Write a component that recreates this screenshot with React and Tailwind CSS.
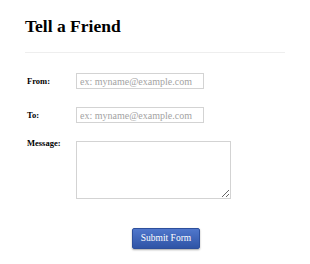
import React from "react";

export default function App() {
  const inputCls =
    "w-[128px] h-[16px] border border-[#d3d3d3] px-[3px] [font-family:'Liberation_Serif',serif] text-[10px] placeholder:text-[#a3a3a3] outline-none";
  return (
    <div className="w-[310px] h-[264px] bg-white px-[25px] [font-family:'Liberation_Serif',serif] text-black overflow-hidden">
      <h1 className="pt-[15px] text-[17.5px] leading-[22px] font-bold">Tell a Friend</h1>
      <div className="mt-[15px] h-px bg-[#eeeeee]" />
      <div className="mt-[20px] flex items-start">
        <label className="w-[51px] pl-[2px] mt-[2.5px] text-[8.5px] leading-[10px] font-bold">From:</label>
        <input type="text" placeholder="ex: myname@example.com" className={inputCls} />
      </div>
      <div className="mt-[18px] flex items-start">
        <label className="w-[51px] pl-[2px] mt-[2.5px] text-[8.5px] leading-[10px] font-bold">To:</label>
        <input type="text" placeholder="ex: myname@example.com" className={inputCls} />
      </div>
      <div className="mt-[18px] flex items-start">
        <label className="w-[51px] pl-[2px] mt-[-3px] text-[8.5px] leading-[10px] font-bold">Message:</label>
        <textarea className="w-[155px] h-[58px] border border-[#d3d3d3] [font-family:'Liberation_Serif',serif] text-[10px] outline-none block" />
      </div>
      <button
        type="button"
        className="mt-[29px] ml-[107px] block w-[68px] h-[21px] rounded-[2px] bg-gradient-to-b from-[#5077cc] to-[#2f54a6] text-white [font-family:'Liberation_Serif',serif] text-[9.5px] leading-[19px] shadow-[0_1px_2px_rgba(0,0,0,0.35)] border border-[#2d4f9c]"
      >
        Submit Form
      </button>
    </div>
  );
}
